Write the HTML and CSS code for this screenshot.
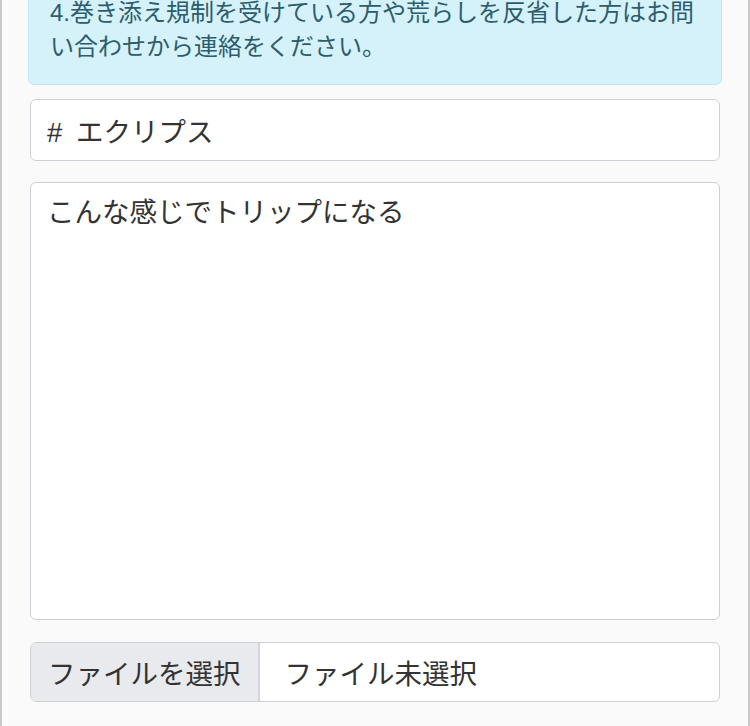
FILE: index.html
```html
<!DOCTYPE html>
<html lang="ja">
<head>
<meta charset="utf-8">
<title>投稿フォーム</title>
<link rel="stylesheet" href="styles.css">
</head>
<body>
<div class="page">
  <div class="alert">4.巻き添え規制を受けている方や荒らしを反省した方はお問い合わせから連絡をください。</div>
  <form class="form">
    <input class="field field-name" type="text" value="# エクリプス">
    <textarea class="field field-body">こんな感じでトリップになる</textarea>
    <label class="file">
      <span class="file-btn">ファイルを選択</span>
      <span class="file-name">ファイル未選択</span>
    </label>
  </form>
</div>
</body>
</html>
```

FILE: styles.css
```css
html, body {
  margin: 0;
  padding: 0;
  background: #fafafa;
}
body {
  font-family: "Liberation Sans", "Noto Sans CJK JP", sans-serif;
  color: #333;
  overflow: hidden;
}
.page {
  display: flow-root;
  box-sizing: border-box;
  height: 726px;
  border-left: 2px solid #c9c9c9;
  border-right: 2px solid #c9c9c9;
  padding: 0 26px;
  background: #fafafa;
}
.alert {
  margin-top: -25px;
  padding: 20px 10px 21px 21px;
  border: 1px solid #bfe8f4;
  border-radius: 6px;
  background: #d5f1fa;
  color: #2c5d6c;
  font-size: 24px;
  line-height: 33.5px;
}
.form {
  display: flex;
  flex-direction: column;
  gap: 21px;
  margin: 14px 2px 0;
}
.field {
  box-sizing: border-box;
  width: 100%;
  margin: 0;
  border: 1px solid #cdd0d7;
  border-radius: 6px;
  background: #fff;
  color: #333;
  font-family: "Liberation Sans", "Noto Sans CJK JP", sans-serif;
  font-size: 27.5px;
  outline: none;
}
.field-name {
  display: block;
  height: 62px;
  padding: 0 16px;
  word-spacing: 6px;
}
.field-body {
  display: block;
  height: 438px;
  padding: 9px 16px;
  line-height: 41px;
  resize: none;
}
.file {
  box-sizing: border-box;
  display: flex;
  align-items: stretch;
  height: 60px;
  margin-top: 1px;
  border: 1px solid #cdd0d7;
  border-radius: 6px;
  background: #fff;
  overflow: hidden;
  font-size: 27.5px;
  color: #333;
}
.file-btn {
  display: flex;
  align-items: center;
  padding: 0 17px;
  background: #e9eaee;
  border-right: 2px solid #d4d6dc;
}
.file-name {
  display: flex;
  align-items: center;
  padding-left: 25px;
}
```
